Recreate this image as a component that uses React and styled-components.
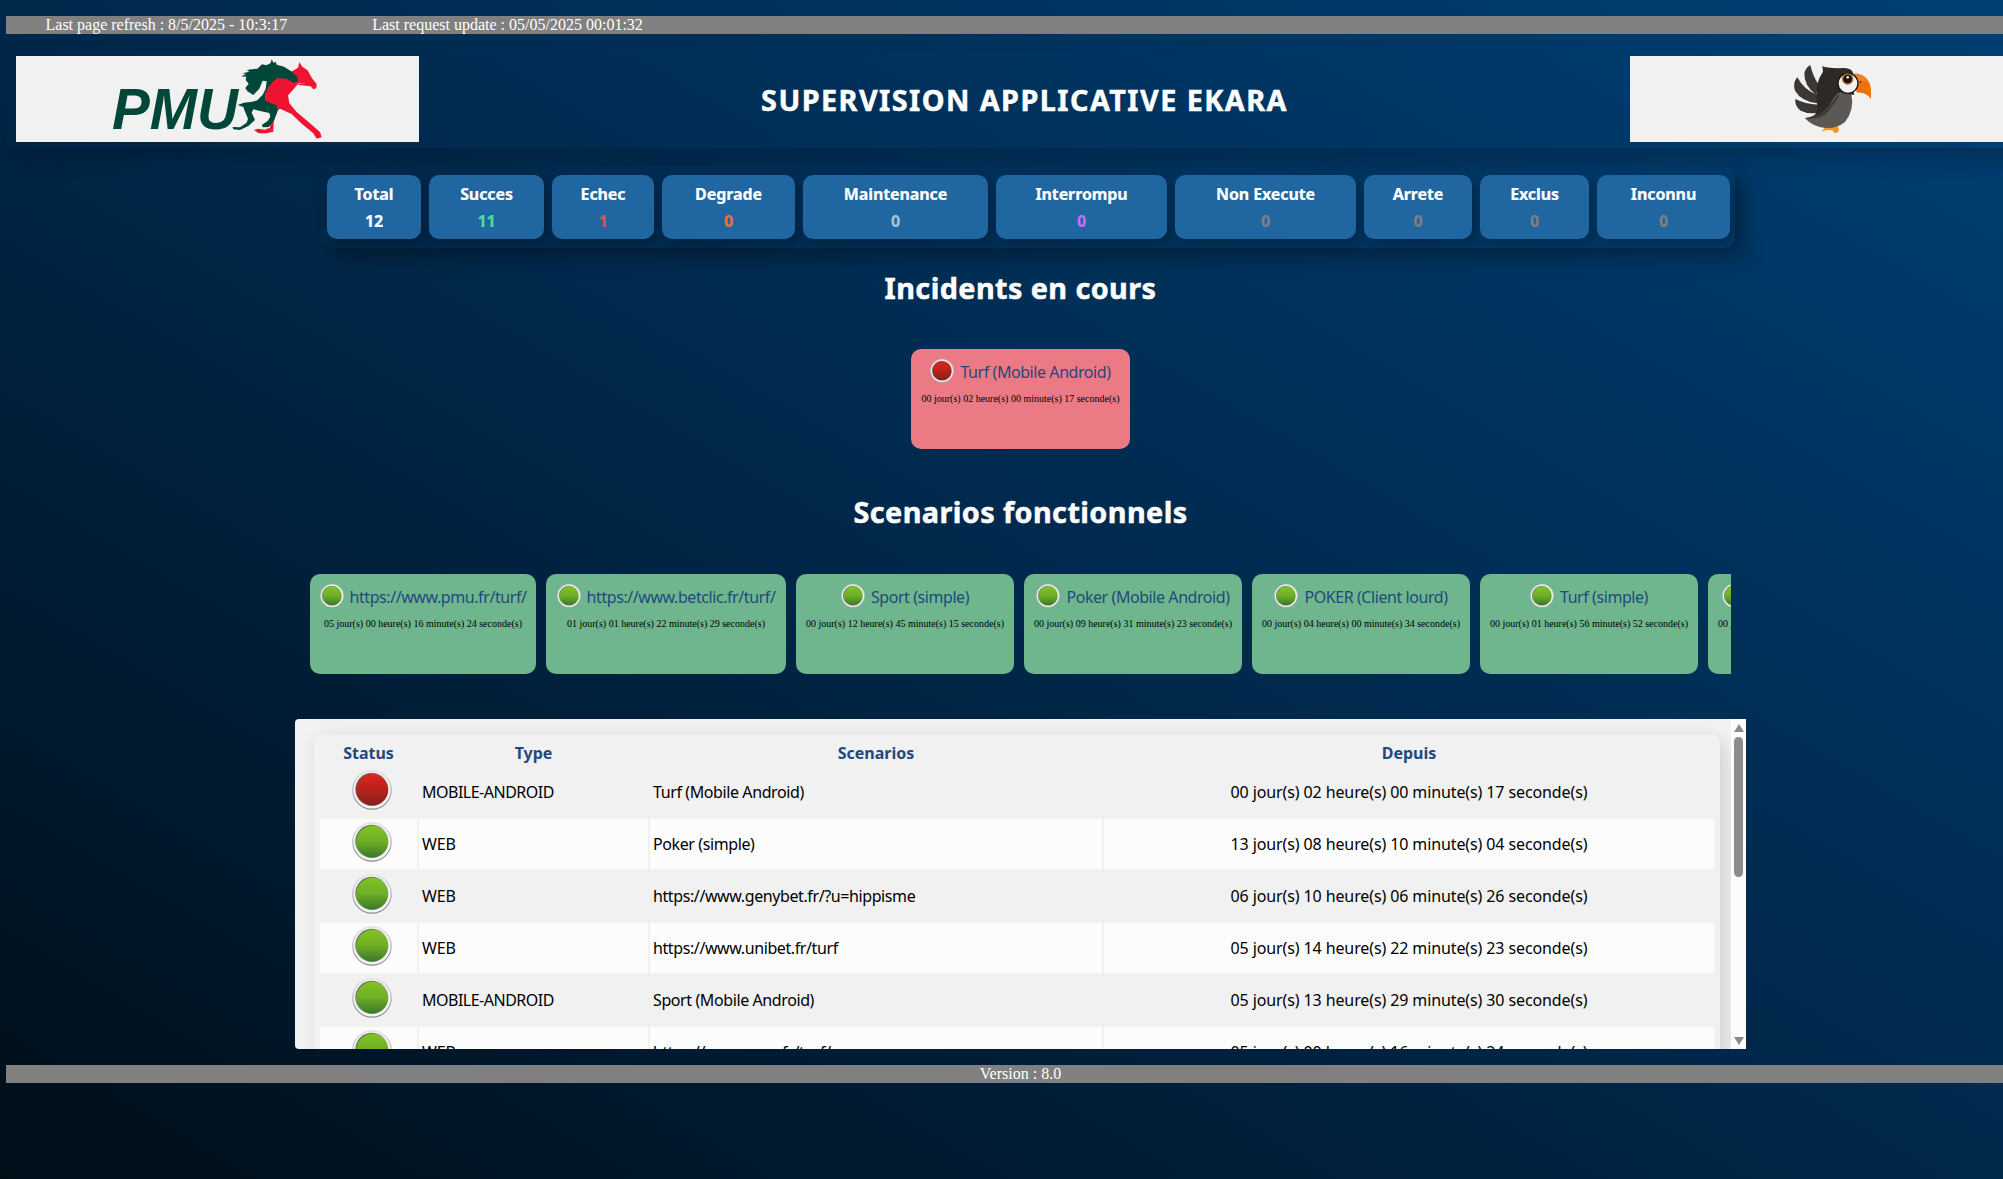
import React from "react";
import styled, { createGlobalStyle } from "styled-components";

const GlobalStyle = createGlobalStyle`
  *, *::before, *::after { box-sizing: border-box; }
  body { margin: 0; }
`;

const ui = `"Noto Sans", "DejaVu Sans", sans-serif`;
const serif = `"Liberation Serif", "Times New Roman", serif`;

const Page = styled.div`
  height: 1179px;
  padding: 16px 0 0 6px;
  overflow: hidden;
  background: linear-gradient(to top right, #000e18, #00284b, #004075);
  font-family: ${ui};
`;

const Content = styled.div`
  width: 2029px;
  display: flex;
  flex-direction: column;
  align-items: center;
`;

const Bar = styled.div`
  align-self: stretch;
  height: 18px;
  display: flex;
  justify-content: ${(p) => (p.$center ? "center" : "flex-start")};
  gap: 85px;
  padding-left: ${(p) => (p.$center ? 0 : 39.5)}px;
  margin-top: ${(p) => p.$top || 0}px;
  background: #808080;
  color: #fff;
  font: 16px/18px ${serif};
  white-space: nowrap;
`;

const Header = styled.header`
  align-self: flex-start;
  width: 2037px;
  height: 98px;
  margin-top: 16px;
  padding: 6px 10px;
  display: flex;
  align-items: center;
  box-shadow: 10px 10px 20px rgba(0, 0, 0, 0.2);
`;

const LogoBox = styled.div`
  width: 403px;
  height: 86px;
  background: #f1f1f1;
  svg { display: block; }
`;

const Title = styled.h1`
  flex: 1;
  margin: 2px 0 0;
  text-align: center;
  color: #fff;
  font-size: 28.8px;
  line-height: 40px;
  letter-spacing: 1.45px;
  -webkit-text-stroke: 0.5px #fff;
`;

const Stats = styled.div`
  display: flex;
  gap: 8px;
  margin: 18px 0 0 15px;
  padding: 9px 5px 9px 6px;
  border-radius: 10px;
  box-shadow: 10px 10px 20px rgba(0, 0, 0, 0.3);
`;

const Stat = styled.div`
  width: ${(p) => p.$w}px;
  height: 64px;
  padding-top: 6px;
  border-radius: 10px;
  background: #2066a0;
  box-shadow: 5px 5px 10px rgba(0, 0, 0, 0.2);
  color: #fff;
  text-align: center;
  font-weight: 700;
  font-size: 16px;
  line-height: 27px;
  letter-spacing: -0.1px;
  -webkit-text-stroke: 0.2px currentColor;
`;

const StatValue = styled.div`
  color: ${(p) => p.$color};
`;

const SectionTitle = styled.h2`
  margin: ${(p) => p.$top}px 0 ${(p) => p.$bottom}px;
  color: #fff;
  font-size: 28.8px;
  line-height: 40px;
  letter-spacing: 0.42px;
  -webkit-text-stroke: 0.5px #fff;
`;

const Cards = styled.div`
  width: 1421px;
  display: flex;
  gap: 10px;
  overflow: hidden;
  justify-content: ${(p) => (p.$center ? "center" : "flex-start")};
`;

const Card = styled.div`
  flex: none;
  width: ${(p) => p.$w}px;
  height: 100px;
  padding-top: 8px;
  border-radius: 10px;
  background: ${(p) => (p.$alert ? "#ec7a85" : "#6fb68e")};
  display: flex;
  flex-direction: column;
  align-items: center;
  white-space: nowrap;
`;

const CardHead = styled.div`
  height: 28px;
  display: flex;
  align-items: center;
  gap: 6px;
`;

const CardName = styled.span`
  padding-top: 2px;
  color: #1f497d;
  font-size: 16px;
  line-height: 22px;
  letter-spacing: -0.43px;
`;

const CardTime = styled.span`
  margin-top: 8px;
  color: #000;
  font: 10px/12px ${serif};
`;

const Panel = styled.div`
  width: 1451px;
  height: 330px;
  margin-top: 45px;
  display: flex;
  border-radius: 4px 0 0 4px;
  overflow: hidden;
  background: #f2f2f2;
`;

const Viewport = styled.div`
  flex: 1;
  padding: 15px 11px 0 19px;
  overflow: hidden;
`;

const Sheet = styled.div`
  height: 400px;
  padding: 2px 6px;
  border-radius: 10px;
  background: #f1f1f1;
  box-shadow: 10px 10px 20px rgba(0, 0, 0, 0.09), 0 0 16px rgba(0, 0, 0, 0.07);
`;

const Row = styled.div`
  display: grid;
  grid-template-columns: 97px 229px 452px 610px;
  gap: 2px;
  height: ${(p) => (p.$head ? 29 : 50)}px;
  margin-bottom: 2px;
`;

const HeadCell = styled.div`
  color: #1f497d;
  font-weight: 700;
  font-size: 16px;
  line-height: 34px;
  text-align: center;
`;

const Cell = styled.div`
  padding: 0 3px;
  background: ${(p) => (p.$light ? "#fcfcfc" : "transparent")};
  color: #000;
  font-size: 16px;
  line-height: 50px;
  letter-spacing: ${(p) => p.$ls || 0}px;
  text-align: ${(p) => (p.$center ? "center" : "left")};
  white-space: nowrap;
`;

const LampCell = styled(Cell)`
  padding: 3px 0 0 32px;
  svg { display: block; }
`;

const Scroll = styled.div`
  width: 15px;
  display: flex;
  flex-direction: column;
  align-items: center;
  padding: 5px 0 4px;
  background: #fcfcfc;
`;

const Thumb = styled.div`
  width: 9px;
  height: 140px;
  margin: 5px 0 auto;
  border-radius: 5px;
  background: #8b8b8b;
`;

const Arrow = styled.div`
  border: solid transparent;
  border-width: ${(p) => (p.$up ? "0 5px 8px" : "8px 5px 0")};
  border-bottom-color: ${(p) => (p.$up ? "#8b8b8b" : "transparent")};
  border-top-color: ${(p) => (p.$up ? "transparent" : "#8b8b8b")};
`;

const Defs = styled.svg`
  position: absolute;
`;

const Gradients = () => (
  <Defs width="0" height="0">
    <defs>
      <linearGradient id="lampGreen" x1="0" y1="0" x2="0" y2="1">
        <stop offset="0" stopColor="#82c225" />
        <stop offset="0.5" stopColor="#6eae27" />
        <stop offset="1" stopColor="#37782a" />
      </linearGradient>
      <linearGradient id="lampRed" x1="0" y1="0" x2="0" y2="1">
        <stop offset="0" stopColor="#dc241b" />
        <stop offset="0.5" stopColor="#b8221b" />
        <stop offset="1" stopColor="#84201c" />
      </linearGradient>
      <linearGradient id="lampRim" x1="0" y1="0" x2="0" y2="1">
        <stop offset="0" stopColor="#dedede" />
        <stop offset="1" stopColor="#8c8c8c" />
      </linearGradient>
      <linearGradient id="lampEdge" x1="0" y1="0" x2="1" y2="1">
        <stop offset="0" stopColor="#24443a" />
        <stop offset="0.6" stopColor="#c8c8c8" />
        <stop offset="1" stopColor="#ffffff" />
      </linearGradient>
    </defs>
  </Defs>
);

const Lamp = ({ red, size }) => (
  <svg width={size} height={size} viewBox="0 0 40 40">
    <circle cx="20" cy="20" r="19.2" fill="#f6f6f6" stroke="url(#lampRim)" strokeWidth="1.2" />
    <circle cx="20" cy="19.6" r="16.8" fill="url(#lampEdge)" />
    <circle cx="20.2" cy="19.8" r="16" fill={red ? "url(#lampRed)" : "url(#lampGreen)"} />
  </svg>
);

const PmuLogo = () => (
  <svg width="403" height="86" viewBox="0 0 403 86">
    <g transform="translate(84 -6) scale(0.33333)">
      <text x="36" y="236" fill="#00473a" fontFamily="Liberation Sans, Arial, sans-serif" fontWeight="700" fontStyle="italic" fontSize="170" textLength="378" lengthAdjust="spacingAndGlyphs">PMU</text>
      <path fill="#f01432" d="M574 65 L594 53 L598 37 L607 50 L622 60 L637 86 L650 102 L649 114 L640 118 L632 109 L596 105 L594 101 L618 100 L596 99 L582 116 L564 136 L568 160 L590 186 L630 220 L660 246 L665 262 L650 266 L640 250 L606 222 L575 192 L540 176 L530 184 L521 216 L520 245 L500 250 L476 250 L462 240 L474 236 L494 239 L510 233 L512 205 L522 170 L495 152 L497 122 L520 88 L550 80 Z" />
      <path fill="#00473a" d="M515 28 L521 39 L527 35 L530 44 L552 50 L577 66 L594 83 L593 95 L581 98 L560 86 L532 85 L520 94 L505 112 L497 128 L495 151 L510 159 L530 166 L533 184 L521 213 L506 231 L488 232 L486 224 L503 213 L511 200 L508 189 L484 184 L460 178 L455 188 L465 210 L445 228 L420 240 L400 238 L398 231 L420 232 L440 218 L444 206 L434 182 L430 171 L413 165 L432 158 L457 155 L472 151 L488 134 L497 116 L500 94 L488 92 L478 116 L460 135 L442 124 L436 114 L446 101 L437 90 L439 80 L423 79 L438 73 L428 70 L448 65 L440 60 L472 56 L486 43 L499 46 L512 39 Z" />
    </g>
  </svg>
);

const BirdLogo = () => (
  <svg width="403" height="86" viewBox="0 0 403 86">
    <g transform="translate(-30 -56) scale(0.33333)">
      <path fill="#f7941d" d="M676 381 L712 377 Q718 384 715 396 L705 400 L697 391 L680 390 L665 395 Z" />
      <g fill="#3a3734">
        <path d="M631 195 Q640 232 655 252 L648 284 Q612 258 613 220 Q617 202 631 195 Z" />
        <path d="M592 232 Q612 270 651 284 L652 310 Q604 304 585 272 Q577 248 592 232 Z" />
        <path d="M586 297 Q616 312 654 314 L654 338 Q628 344 602 332 Q583 318 586 297 Z" />
      </g>
      <path fill="#5c5855" d="M754 282 Q764 330 735 366 Q710 386 676 384 Q638 380 614 354 Q650 352 690 300 Q710 270 754 282 Z" />
      <path fill="#2c2926" d="M667 198 Q680 206 735 204 Q758 206 760 222 L762 285 L722 278 Q704 282 694 306 Q680 336 640 352 Q656 335 650 300 Q644 250 669 215 Z" />
      <path fill="#3d3936" d="M722 278 Q700 298 690 318 Q672 344 616 355 Q660 360 684 336 Q704 312 722 278 Z" />
      <path fill="#f58220" d="M760 220 Q792 220 806 244 Q815 262 812 296 Q798 276 770 277 Z" />
      <path fill="#ee7203" d="M774 248 Q800 240 808 250 Q815 270 812 296 Q800 274 770 277 Z" />
      <path fill="#5b3010" d="M778 244 L787 243 L781 250 Z" />
      <circle cx="744" cy="250" r="30" fill="#f1f1f1" stroke="#151515" strokeWidth="4" />
      <circle cx="743" cy="237" r="15" fill="#15120f" stroke="#b56a17" strokeWidth="4" />
      <circle cx="743" cy="232" r="4" fill="#f4f4f4" />
    </g>
  </svg>
);

const stats = [
  ["Total", "12", 94, "#ffffff"],
  ["Succes", "11", 115, "#4fdc9b"],
  ["Echec", "1", 102, "#e04f56"],
  ["Degrade", "0", 133, "#e8743b"],
  ["Maintenance", "0", 185, "#a9c2da"],
  ["Interrompu", "0", 171, "#cf6cf2"],
  ["Non Execute", "0", 181, "#808080"],
  ["Arrete", "0", 108, "#808080"],
  ["Exclus", "0", 109, "#808080"],
  ["Inconnu", "0", 133, "#808080"],
];

const scenarios = [
  ["https://www.pmu.fr/turf/", "05 jour(s) 00 heure(s) 16 minute(s) 24 seconde(s)", 226],
  ["https://www.betclic.fr/turf/", "01 jour(s) 01 heure(s) 22 minute(s) 29 seconde(s)", 240],
  ["Sport (simple)", "00 jour(s) 12 heure(s) 45 minute(s) 15 seconde(s)", 218],
  ["Poker (Mobile Android)", "00 jour(s) 09 heure(s) 31 minute(s) 23 seconde(s)", 218],
  ["POKER (Client lourd)", "00 jour(s) 04 heure(s) 00 minute(s) 34 seconde(s)", 218],
  ["Turf (simple)", "00 jour(s) 01 heure(s) 56 minute(s) 52 seconde(s)", 218],
  ["Hippique (Client lourd)", "00 jour(s) 01 heure(s) 20 minute(s) 10 seconde(s)", 218],
];

const rows = [
  ["MOBILE-ANDROID", "Turf (Mobile Android)", "00 jour(s) 02 heure(s) 00 minute(s) 17 seconde(s)"],
  ["WEB", "Poker (simple)", "13 jour(s) 08 heure(s) 10 minute(s) 04 seconde(s)"],
  ["WEB", "https://www.genybet.fr/?u=hippisme", "06 jour(s) 10 heure(s) 06 minute(s) 26 seconde(s)"],
  ["WEB", "https://www.unibet.fr/turf", "05 jour(s) 14 heure(s) 22 minute(s) 23 seconde(s)"],
  ["MOBILE-ANDROID", "Sport (Mobile Android)", "05 jour(s) 13 heure(s) 29 minute(s) 30 seconde(s)"],
  ["WEB", "https://www.pmu.fr/turf/", "05 jour(s) 00 heure(s) 16 minute(s) 24 seconde(s)"],
];

const ScenarioCard = ({ name, time, width, alert }) => (
  <Card $w={width} $alert={alert}>
    <CardHead>
      <Lamp red={alert} size={24} />
      <CardName>{name}</CardName>
    </CardHead>
    <CardTime>{time}</CardTime>
  </Card>
);

export default function App() {
  return (
    <Page>
      <GlobalStyle />
      <Gradients />
      <Content>
        <Bar>
          <span>Last page refresh : 8/5/2025 - 10:3:17</span>
          <span>Last request update : 05/05/2025 00:01:32</span>
        </Bar>
        <Header>
          <LogoBox><PmuLogo /></LogoBox>
          <Title>SUPERVISION APPLICATIVE EKARA</Title>
          <LogoBox><BirdLogo /></LogoBox>
        </Header>
        <Stats>
          {stats.map(([label, value, w, color]) => (
            <Stat key={label} $w={w}>
              <div>{label}</div>
              <StatValue $color={color}>{value}</StatValue>
            </Stat>
          ))}
        </Stats>
        <SectionTitle $top={20} $bottom={41}>Incidents en cours</SectionTitle>
        <Cards $center>
          <ScenarioCard alert name="Turf (Mobile Android)" time="00 jour(s) 02 heure(s) 00 minute(s) 17 seconde(s)" width={219} />
        </Cards>
        <SectionTitle $top={43} $bottom={42}>Scenarios fonctionnels</SectionTitle>
        <Cards>
          {scenarios.map(([name, time, w]) => (
            <ScenarioCard key={name} name={name} time={time} width={w} />
          ))}
        </Cards>
        <Panel>
          <Viewport>
            <Sheet>
              <Row $head>
                <HeadCell>Status</HeadCell>
                <HeadCell>Type</HeadCell>
                <HeadCell>Scenarios</HeadCell>
                <HeadCell>Depuis</HeadCell>
              </Row>
              {rows.map(([type, name, since], i) => (
                <Row key={name}>
                  <LampCell $light={i % 2 === 1}><Lamp red={i === 0} size={40} /></LampCell>
                  <Cell $light={i % 2 === 1} $ls={type === "WEB" ? -0.2 : -0.5}>{type}</Cell>
                  <Cell $light={i % 2 === 1} $ls={-0.4}>{name}</Cell>
                  <Cell $light={i % 2 === 1} $center $ls={-0.11}>{since}</Cell>
                </Row>
              ))}
            </Sheet>
          </Viewport>
          <Scroll>
            <Arrow $up />
            <Thumb />
            <Arrow />
          </Scroll>
        </Panel>
        <Bar $center $top={16}>Version : 8.0</Bar>
      </Content>
    </Page>
  );
}
